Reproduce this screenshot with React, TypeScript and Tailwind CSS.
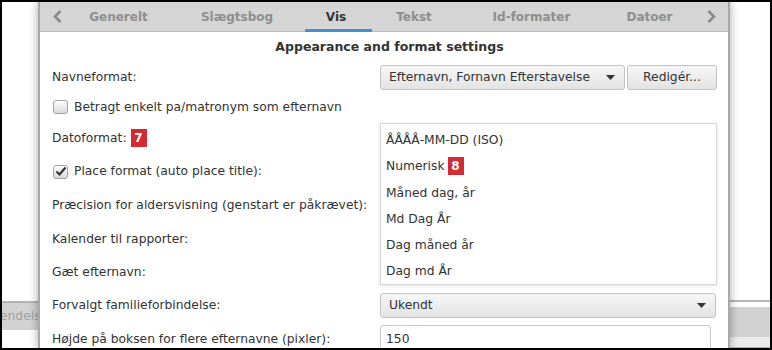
import React from 'react';

const tabs: { label: string; w: string; active?: boolean }[] = [
  { label: 'Generelt', w: 'w-[111px]' },
  { label: 'Slægtsbog', w: 'w-[126px]' },
  { label: 'Vis', w: 'w-[67px] ml-[5px]', active: true },
  { label: 'Tekst', w: 'w-[84px]' },
  { label: 'Id-formater', w: 'w-[151px]' },
  { label: 'Datoer', w: 'w-[85px]' },
];

const dateFormats = ['ÅÅÅÅ-MM-DD (ISO)', 'Numerisk', 'Måned dag, år', 'Md Dag År', 'Dag måned år', 'Dag md År'];

function Badge({ n }: { n: string }) {
  return (
    <span className="inline-flex items-center justify-center w-[16px] h-[18px] bg-[#d32a33] text-white font-bold text-[12px] leading-none">
      {n}
    </span>
  );
}

function Checkbox({ checked }: { checked?: boolean }) {
  return (
    <span className="w-[15px] h-[14px] rounded-[3px] border border-[#a3a3a3] bg-linear-to-b from-white to-[#dadada] flex items-center justify-center shrink-0">
      {checked && (
        <svg width="12" height="11" viewBox="0 0 12 11">
          <path d="M1.5 5.5 L4.5 8.5 L10.5 1.5" fill="none" stroke="#333" strokeWidth="2.2" />
        </svg>
      )}
    </span>
  );
}

function Caret() {
  return (
    <svg width="9" height="5" viewBox="0 0 9 5">
      <path d="M0 0 H9 L4.5 5 Z" fill="#333" />
    </svg>
  );
}

function Select({ value, w }: { value: string; w: string }) {
  return (
    <div
      className={`${w} h-[25px] shrink-0 rounded-[3px] border border-[#c3c3c3] bg-linear-to-b from-[#f7f7f7] to-[#e3e3e3] flex items-center justify-between pl-[8px] pr-[9px]`}
    >
      <span>{value}</span>
      <Caret />
    </div>
  );
}

function Row({ h, label, children }: { h: string; label: React.ReactNode; children?: React.ReactNode }) {
  return (
    <div className={`${h} shrink-0 flex items-center`}>
      <div className="w-[328px] shrink-0 flex items-center whitespace-nowrap">{label}</div>
      {children}
    </div>
  );
}

export default function App() {
  return (
    <div className="w-[772px] h-[350px] border-2 border-black bg-white flex overflow-hidden font-['DejaVu_Sans',sans-serif] text-[12.3px] text-[#333]">
      {/* background window, left */}
      <div className="w-[36px] shrink-0 flex flex-col">
        <div className="h-[299px] shrink-0" />
        <div className="h-[29px] shrink-0 border-t-2 border-[#b3b3b3] bg-[#d3d3d3] flex items-center overflow-hidden whitespace-nowrap text-[#a0a0a0]">
          <span className="ml-[-2px]">endelse</span>
        </div>
      </div>

      {/* dialog */}
      <div className="w-[692px] shrink-0 border-x-2 border-[#a9a9a9] bg-white relative z-10 overflow-hidden shadow-[0_0_9px_rgba(0,0,0,0.35)] flex flex-col">
        <div className="h-[30px] shrink-0 bg-[#d5d5d5] border-b border-[#bcbcbc] flex items-center pl-[12px] font-bold text-[12px] text-[#8e8e8e]">
          <svg width="11" height="13" viewBox="0 0 11 13" className="shrink-0">
            <path d="M8.5 1 L3 6.5 L8.5 12" fill="none" stroke="#8a8a8a" strokeWidth="2.6" />
          </svg>
          {tabs.map((t) => (
            <div
              key={t.label}
              className={`${t.w} h-full shrink-0 flex items-center justify-center ${
                t.active ? 'text-[#333] border-b-[3px] border-[#4a8dcc] mb-[-1px] pt-[2px] pr-[5px]' : ''
              }`}
            >
              {t.label}
            </div>
          ))}
          <svg width="11" height="13" viewBox="0 0 11 13" className="ml-[14px] shrink-0">
            <path d="M2.5 1 L8 6.5 L2.5 12" fill="none" stroke="#8a8a8a" strokeWidth="2.6" />
          </svg>
        </div>

        <div className="pl-[12px] pr-[11px] flex flex-col shrink-0">
          <div className="h-[31px] shrink-0 flex items-end justify-center pb-[6px] pl-[10px] font-bold text-[12.5px]">
            Appearance and format settings
          </div>
          <Row h="h-[29px]" label="Navneformat:">
            <Select value="Efternavn, Fornavn Efterstavelse" w="w-[245px]" />
            <div className="w-[90px] h-[25px] shrink-0 ml-[2px] rounded-[3px] border border-[#c3c3c3] bg-linear-to-b from-[#f7f7f7] to-[#e3e3e3] flex items-center justify-center">
              Redigér...
            </div>
          </Row>
          <div className="h-[30px] shrink-0 flex items-center gap-[6px] pl-[1px]">
            <Checkbox />
            <span>Betragt enkelt pa/matronym som efternavn</span>
          </div>
          <Row
            h="h-[33px]"
            label={
              <>
                <span>Datoformat:</span>
                <span className="ml-[4px]">
                  <Badge n="7" />
                </span>
              </>
            }
          />
          <div className="h-[33px] shrink-0 flex items-center gap-[6px] pl-[1px]">
            <Checkbox checked />
            <span>Place format (auto place title):</span>
          </div>
          <Row h="h-[34px]" label="Præcision for aldersvisning (genstart er påkrævet):" />
          <Row h="h-[34px]" label="Kalender til rapporter:" />
          <Row h="h-[32px]" label="Gæt efternavn:" />
          <Row h="h-[34px]" label="Forvalgt familieforbindelse:">
            <Select value="Ukendt" w="w-[336px]" />
          </Row>
          <div className="h-[34px] shrink-0 flex items-start">
            <div className="w-[328px] shrink-0 h-[28px] mt-[3px] flex items-center whitespace-nowrap">
              Højde på boksen for flere efternavne (pixler):
            </div>
            <div className="w-[331px] shrink-0 h-[28px] mt-[3px] rounded-[3px] border border-[#c8c8c8] bg-white flex items-center pl-[5px]">
              150
            </div>
          </div>
        </div>

        {/* open date format list */}
        <div className="absolute left-[340px] top-[121px] w-[337px] h-[162px] border border-[#d6d6d6] bg-white shadow-[0_1px_3px_rgba(0,0,0,0.12)] pt-[3px] overflow-hidden">
          {dateFormats.map((f) => (
            <div key={f} className="h-[26.3px] flex items-center px-[5px] whitespace-nowrap">
              <span>{f}</span>
              {f === 'Numerisk' && (
                <span className="ml-[3px]">
                  <Badge n="8" />
                </span>
              )}
            </div>
          ))}
        </div>
      </div>

      {/* background window, right */}
      <div className="flex-1 flex flex-col">
        <div className="h-[298px] shrink-0" />
        <div className="h-[2px] shrink-0 bg-[#b6b6b6]" />
        <div className="h-[5px] shrink-0" />
        <div className="h-[30px] shrink-0 bg-[#d2d2d2]" />
        <div className="h-[10px] shrink-0 bg-[#ececec]" />
        <div className="h-[1px] shrink-0 bg-[#b0b0b0]" />
      </div>
    </div>
  );
}
